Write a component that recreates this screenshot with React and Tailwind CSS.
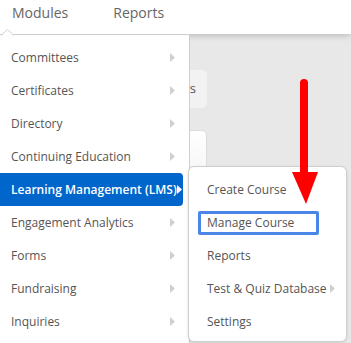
import React from "react";

const Chevron = ({ white }) => (
  <svg width="5" height="9" viewBox="0 0 5 9" className="shrink-0">
    <path d="M0 0 L5 4.5 L0 9 Z" fill={white ? "#ffffff" : "#d0d0d0"} />
  </svg>
);

const mainItems = [
  "Committees",
  "Certificates",
  "Directory",
  "Continuing Education",
  "Learning Management (LMS)",
  "Engagement Analytics",
  "Forms",
  "Fundraising",
  "Inquiries",
];

const subItems = ["Create Course", "Manage Course", "Reports", "Test & Quiz Database", "Settings"];

export default function App() {
  return (
    <div
      className="relative w-[351px] h-[343px] overflow-hidden bg-[#e8e8e8]"
      style={{ fontFamily: "'Open Sans', 'Liberation Sans', sans-serif" }}
    >
      {/* top nav */}
      <div className="relative z-10 h-[34px] bg-white flex items-start gap-[45px] pl-[12px] pt-[2px] text-[14px] text-[#666] shadow-[0_2px_6px_rgba(0,0,0,0.18)]">
        <span>Modules</span>
        <span>Reports</span>
      </div>

      {/* background content */}
      <div className="flex flex-col items-start pl-[110px] pt-[36px] gap-[22px]">
        <div className="w-[97px] h-[38px] rounded-[5px] bg-[#f2f2f2] flex items-center justify-end pr-[11px] text-[13px] text-[#555]">
          Sessions
        </div>
        <div className="w-[97px] h-[60px] rounded-[5px] border border-[#dcdcdc] bg-gradient-to-b from-white to-[#f3f3f3]" />
      </div>

      {/* main dropdown */}
      <div className="absolute left-0 top-[34px] w-[190px] h-[320px] bg-white border-t border-r border-[#cfcfcf] z-20 pt-[6px]">
        <svg className="absolute left-[1px] top-[-6px]" width="14" height="7" viewBox="0 0 14 7">
          <path d="M0 6.5 L6.5 0.5 L13 6.5" fill="white" stroke="#cfcfcf" strokeWidth="1" />
        </svg>
        {mainItems.map((t) => {
          const active = t.startsWith("Learning");
          return (
            <div
              key={t}
              className={
                "h-[33px] w-[183px] flex items-center justify-between pl-[11px] pr-[8px] text-[12px] " +
                (active
                  ? "bg-[#0066cc] text-white rounded-r-[4px] font-semibold pr-[7px]"
                  : "text-[#555]")
              }
            >
              <span className="whitespace-nowrap">{t}</span>
              <Chevron white={active} />
            </div>
          );
        })}
      </div>

      {/* submenu */}
      <div className="absolute left-[188px] top-[166px] w-[159px] h-[176px] bg-white border border-[#cfcfcf] rounded-[6px] z-20 shadow-[0_1px_3px_rgba(0,0,0,0.12)] pt-[6px]">
        {subItems.map((t) => {
          const boxed = t === "Manage Course";
          const chev = t.startsWith("Test");
          return (
            <div key={t} className="h-[33px] flex items-center pl-[18px] text-[12px] text-[#555]">
              {boxed ? (
                <span className="border-[3px] border-[#4a86e8] rounded-[2px] w-[121px] h-[24px] flex items-center pl-[6px] ml-[-9px] whitespace-nowrap">
                  {t}
                </span>
              ) : (
                <span className="whitespace-nowrap flex items-center gap-[3px]">
                  {t}
                  {chev && <Chevron />}
                </span>
              )}
            </div>
          );
        })}
      </div>

      {/* red arrow annotation */}
      <svg className="absolute left-[290px] top-[78px] z-30" width="30" height="128" viewBox="0 0 30 128">
        <path d="M14 94 L14 5" stroke="#ff0000" strokeWidth="8" strokeLinecap="round" />
        <path d="M2 94 L28 94 L16 126 Z" fill="#ff0000" />
      </svg>
    </div>
  );
}
